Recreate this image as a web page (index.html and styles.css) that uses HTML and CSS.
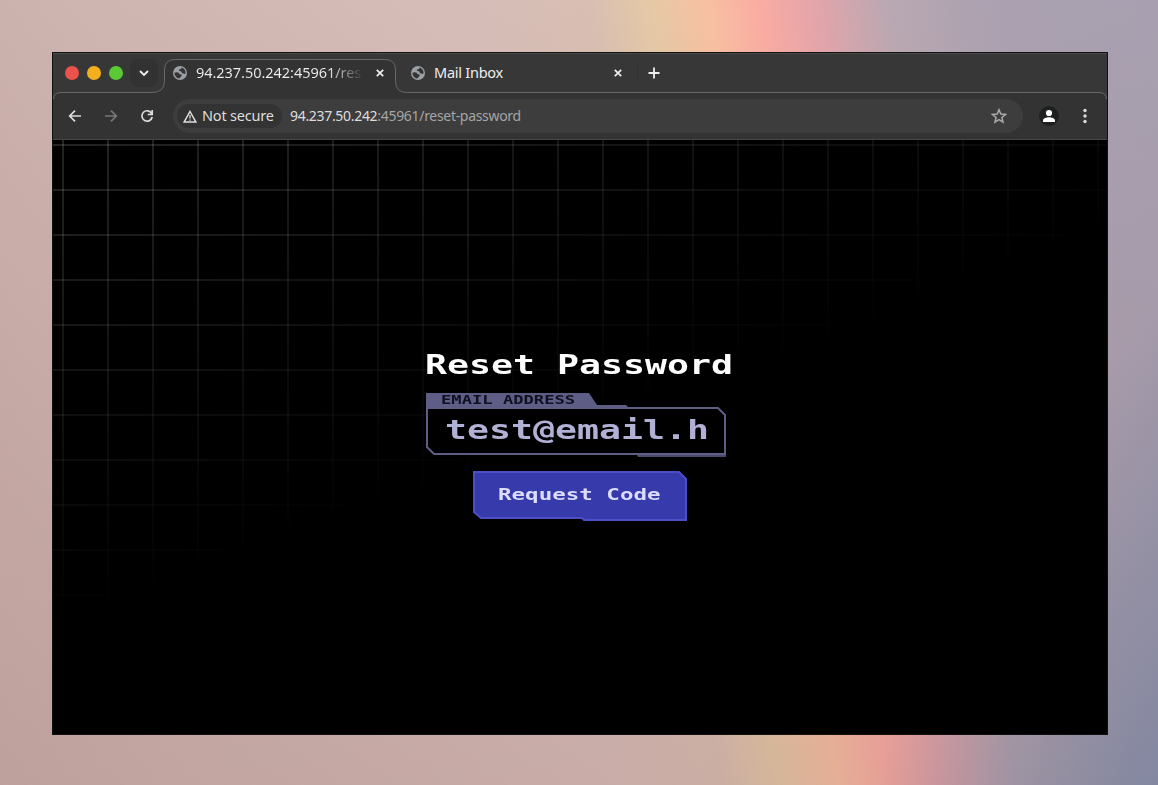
FILE: index.html
```html
<!DOCTYPE html>
<html lang="en">
<head>
<meta charset="utf-8">
<title>Reset Password</title>
<link rel="stylesheet" href="styles.css">
</head>
<body>
<svg class="defs" width="0" height="0" aria-hidden="true">
  <symbol id="globe" viewBox="0 0 14 14">
    <circle cx="7" cy="7" r="7" fill="#9aa0a6"/>
    <path d="M1.300 6.800Q3.500 5.600 5.300 6.600Q6 7 6.300 8L8.600 8.600Q9 10.600 7.600 10.900L6.400 12.500Q2 12 1.300 6.800zM8.600 1.500Q8.600 3 7 3.200L5.600 4Q6.200 5.200 8 5.200Q8.700 7.800 10.400 7.600Q11.600 8.200 12.500 7.600Q13 3 8.600 1.500z" fill="#353535"/>
  </symbol>
  <symbol id="close" viewBox="0 0 8 8"><path d="M.8.8l6.4 6.4M7.2.8L.8 7.2" fill="none" stroke="#eee" stroke-width="1.7"/></symbol>
</svg>
<main class="window">
  <header class="tabbar">
    <div class="lights"><i class="red"></i><i class="yellow"></i><i class="green"></i></div>
    <div class="search"><svg width="10" height="6" viewBox="0 0 10 6"><path d="M1 1l4 4 4-4" fill="none" stroke="#eee" stroke-width="1.8"/></svg></div>
    <div class="tab tab-one"><svg class="globe"><use href="#globe"/></svg><span class="title faded">94.237.50.242:45961/res</span><svg class="close"><use href="#close"/></svg></div>
    <div class="tab tab-two"><svg class="globe"><use href="#globe"/></svg><span class="title">Mail Inbox</span><svg class="close"><use href="#close"/></svg></div>
    <i class="divider"></i>
    <svg class="plus" width="12" height="12" viewBox="0 0 12 12"><path d="M6 .5v11M.5 6h11" stroke="#eee" stroke-width="1.8"/></svg>
    <svg class="outline" width="1054" height="47" viewBox="0 0 1054 47"><path class="fill" d="M0 47Q0 40 8 40H99Q111 40 111 29V18Q111 7 122 7H332Q343 7 343 18V29Q343 40 354 40H1046Q1054 40 1054 47"/><path class="line" d="M.5 47Q.5 40.5 8 40.5H99Q111.500 40.500 111.500 29V18Q111.500 7.500 122 7.500H332Q342.500 7.500 342.500 18V29Q342.500 40.500 354 40.500H1046Q1053.500 40.500 1053.500 47"/></svg>
  </header>
  <nav class="toolbar">
    <svg class="nav" viewBox="0 0 16 16"><path d="M14 8H3M8 2.700L2.700 8 8 13.300" /></svg>
    <svg class="nav dim" viewBox="0 0 16 16"><path d="M2 8h11M8 2.700L13.300 8 8 13.300" /></svg>
    <svg class="nav" viewBox="0 0 16 16"><path d="M12.700 5.500A5.200 5.200 0 1 0 13.200 9M13.200 2v4.500H8.700" /></svg>
    <div class="address">
      <div class="chip"><svg width="14" height="13" viewBox="0 0 14 13"><path d="M7 1.500L12.800 12H1.200z" fill="none" stroke="#ddd" stroke-width="1.500"/><path d="M7 5v3.500M7 9.500v1.300" stroke="#ddd" stroke-width="1.300"/></svg><span>Not secure</span></div>
      <div class="url"><b>94.237.50.242</b>:45961/reset-password</div>
      <svg class="star" width="16" height="16" viewBox="0 0 16 16"><path d="M8 1.700l1.800 4.400 4.700.4-3.600 3 1.100 4.600L8 11.600l-4 2.500 1.100-4.600-3.600-3 4.700-.4z" fill="none" stroke="#aaa" stroke-width="1.500"/></svg>
    </div>
    <svg class="avatar" width="20" height="20" viewBox="0 0 20 20"><circle cx="10" cy="10" r="10" fill="#1e2020"/><circle cx="10" cy="7" r="3.100" fill="#fff"/><path d="M4 16v-1.600c0-2 3.500-3.200 6-3.200s6 1.200 6 3.200V16z" fill="#fff"/></svg>
    <svg class="dots" width="4" height="16" viewBox="0 0 4 16"><g fill="#ddd"><circle cx="2" cy="2.500" r="1.700"/><circle cx="2" cy="8" r="1.700"/><circle cx="2" cy="13.500" r="1.700"/></g></svg>
  </nav>
  <section class="page">
    <h1 class="pixel"><span>Reset Password</span></h1>
    <div class="field">
      <svg class="frame" width="302" height="66" viewBox="0 0 302 66">
        <path d="M0 0H163L171 12H200L202 14H0z" fill="#5d5d86"/>
        <path d="M1 14V54L8 61H299V22L292 15H1z" fill="#000" stroke="#5d5d86" stroke-width="2"/>
        <path d="M211 62H300V64H212z" fill="#4b4b70"/>
      </svg>
      <label class="pixel"><span>EMAIL ADDRESS</span></label>
      <div class="value pixel"><span>test@email.h</span></div>
    </div>
    <div class="button">
      <svg class="frame" width="214" height="50" viewBox="0 0 214 50"><path d="M1 1H206L213 8V49H111L109 47H8L1 41z" fill="#373aaa" stroke="#4b4ec6" stroke-width="2"/></svg>
      <div class="pixel"><span>Request Code</span></div>
    </div>
  </section>
</main>
</body>
</html>
```
FILE: styles.css
```css
* { box-sizing: border-box; }
body {
  margin: 0;
  width: 1158px;
  height: 785px;
  padding: 52px 50px 50px 52px;
  overflow: hidden;
  font-family: "Noto Sans", sans-serif;
  background:
    linear-gradient(120deg, rgba(90,120,160,0) 82%, rgba(90,120,160,.45) 100%),
    linear-gradient(180deg, rgba(140,95,95,0) 0%, rgba(140,95,95,.18) 100%),
    linear-gradient(80.6deg, #c9aea9 0%, #cfb6b1 20%, #d6bdb7 48%, #d9bfb2 56%, #e5c9a6 60.5%, #f8c0a2 65%, #faaca2 69%, #e5a5aa 73%, #b9a8b2 79%, #aaa0b0 88%, #a8a0b0 100%);
}
.defs { position: absolute; }
.window { width: 1056px; height: 683px; border: 1px solid #111; background: #000; }
.tabbar { position: relative; display: flex; align-items: center; height: 46px; padding-bottom: 7px; background: #373737; border-top: 1px solid #4a4a4a; }
.lights { display: flex; gap: 8px; padding-left: 12px; }
.lights i { width: 14px; height: 14px; border-radius: 50%; }
.red { background: #eb5249; }
.yellow { background: #f2b01e; }
.green { background: #5ac935; }
.search { display: flex; align-items: center; justify-content: center; width: 28px; height: 28px; margin-left: 7px; border-radius: 9px; background: #323232; z-index: 1; }
.tab { display: flex; align-items: center; z-index: 1; color: #eee; font-size: 14.500px; }
.tab-one { width: 211px; margin-left: 15px; }
.tab-two { width: 211px; margin-left: 27px; }
.globe { width: 14px; height: 14px; margin-right: 9px; }
.close { width: 8px; height: 8px; margin-left: auto; }
.title { white-space: nowrap; line-height: 20px; margin-top: -2px; letter-spacing: -.04px; }
.tab-two .title { letter-spacing: -.25px; }
.faded { background: linear-gradient(90deg, #eee 80%, #444 100%); background-clip: text; color: transparent; }
.divider { width: 1px; height: 16px; margin-left: 15px; background: #303030; z-index: 1; }
.plus { margin-left: 10px; z-index: 1; }
.outline { position: absolute; left: 0; top: -2px; }
.outline .fill { fill: #333; }
.outline .line { fill: none; stroke: #686868; }
.toolbar { display: flex; align-items: center; height: 41px; padding: 0 20px 6px 14px; background: #333; border-bottom: 1px solid #474747; }
.nav { width: 16px; height: 16px; margin-right: 20px; fill: none; stroke: #ddd; stroke-width: 1.700; flex: none; }
.dim { stroke: #777; }
.address { display: flex; align-items: center; width: 850px; height: 34px; margin-left: -2px; padding: 0 16px 0 4px; background: #3d3d3d; border-radius: 17px; }
.chip { display: flex; align-items: center; gap: 5px; width: 105px; height: 24px; padding-left: 6px; border-radius: 12px; background: #333; color: #ddd; font-size: 14.500px; letter-spacing: -.2px; white-space: nowrap; }
.chip span, .url { margin-top: -2px; }
.url { margin-left: 8px; color: #a5a5a5; font-size: 14px; letter-spacing: -.31px; white-space: nowrap; }
.url b { color: #ddd; font-weight: 400; }
.star { margin-left: auto; }
.avatar { margin-left: 16px; }
.dots { margin-left: 24px; }
.page {
  position: relative;
  height: 594px;
  display: flex;
  flex-direction: column;
  padding: 210px 0 0 373px;
}
.page::before {
  content: "";
  position: absolute;
  inset: 0;
  background:
    repeating-linear-gradient(90deg, rgba(255,255,255,.14) 0 2px, transparent 2px 45px) 9px 0,
    repeating-linear-gradient(180deg, rgba(255,255,255,.14) 0 2px, transparent 2px 45px) 0 4px;
  background-size: 45px 45px;
  mask-image: linear-gradient(159.500deg, #000 0%, transparent 50%);
}
.pixel { position: relative; margin: 0; font-family: "DejaVu Sans Mono", monospace; font-weight: 700; white-space: pre; }
.pixel span { display: inline-block; transform-origin: 0 50%; }
h1.pixel { left: -1px; height: 43px; font-size: 27px; line-height: 29px; color: #fff; }
h1 span { transform: scaleX(1.353); }
.field { position: relative; height: 78px; padding-left: 15px; }
.frame { position: absolute; left: 0; top: 0; }
.field label { display: block; height: 14px; font-size: 11.500px; line-height: 14px; color: #101020; }
.field label span { transform: scaleX(1.490); }
.value { padding-left: 4px; height: 47px; font-size: 27px; line-height: 46px; color: #b1b1d5; }
.value span { transform: scaleX(1.353); }
.button { position: relative; width: 214px; height: 50px; margin-left: 47px; padding-left: 25px; font-size: 15px; line-height: 48px; color: #dcdcff; }
.button .pixel span { transform: scaleX(1.500); }
```
